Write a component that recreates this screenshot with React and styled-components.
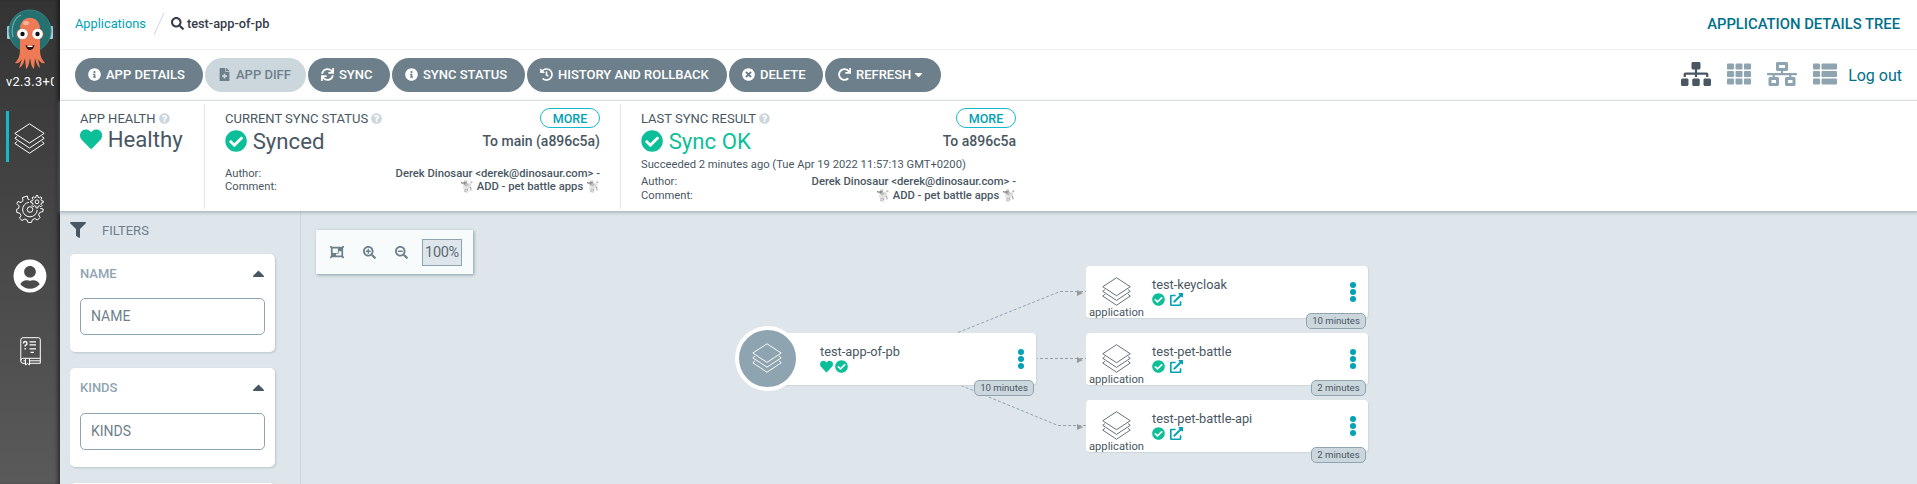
import React from 'react';
import styled, { createGlobalStyle } from 'styled-components';
import {
  FaSearch, FaInfoCircle, FaFileMedical, FaSync, FaHistory, FaTimesCircle, FaRedo, FaCaretDown, FaCaretUp,
  FaSitemap, FaTh, FaNetworkWired, FaThList, FaHeart, FaCheckCircle, FaQuestionCircle, FaFilter,
  FaObjectGroup, FaSearchPlus, FaSearchMinus, FaExternalLinkAlt, FaUserCircle,
} from 'react-icons/fa';

const c = {
  text: '#495763', slate: '#6d7f8b', steel: '#8fa4b1', pale: '#ccd6dd', bg: '#dee6eb',
  teal: '#00a2b3', deepTeal: '#006f8a', green: '#0dbf98', white: '#fff',
};

const GlobalStyle = createGlobalStyle`
  * { box-sizing: border-box; }
  body { margin: 0; font-family: Roboto, 'Liberation Sans', sans-serif; color: ${c.text}; background: ${c.bg}; overflow: hidden; }
  svg { display: block; flex: none; }
`;

const Page = styled.div`display: flex; height: 484px; overflow: hidden;`;

const Sidebar = styled.nav`
  width: 60px; flex: none; display: flex; flex-direction: column; align-items: center;
  padding-top: 8px; color: #fff;
  background: linear-gradient(to bottom, #343434, #5a5a5a);
  box-shadow: inset -4px 0 4px -2px rgba(0, 0, 0, .55);
`;
const Version = styled.div`
  width: 48px; margin-top: 2px; margin-bottom: 1px; overflow: hidden; white-space: nowrap;
  font-size: 12.8px; line-height: 19px; letter-spacing: .35px; height: 18px;
`;
const NavItem = styled.div`
  width: 60px; height: ${p => p.$h}px; margin-top: ${p => p.$gap}px;
  display: flex; align-items: center; justify-content: center;
  ${p => p.$active && `
    align-self: flex-start; width: 45px; margin-left: 6px; padding-top: 3px; padding-right: 1px;
    border-left: 3px solid #18b8cc;
  `}
`;

const Main = styled.div`flex: 1; min-width: 0; display: flex; flex-direction: column;`;

const TopBar = styled.header`
  height: 50px; flex: none; display: flex; align-items: center; padding: 0 17px 2px 15px;
  background: #fff; border-bottom: 1px solid #ecf0f3;
`;
const Crumb = styled.span`
  font-size: 12.8px; line-height: 20px; font-weight: ${p => (p.$current ? 500 : 400)};
  color: ${p => (p.$current ? '#363c4a' : c.teal)};
`;
const CrumbSearch = styled(FaSearch)`color: #363c4a; margin-right: 3px;`;
const Slash = styled.svg`margin: 0 6px 0 7px;`;
const Title = styled.h1`margin: 0 0 0 auto; font-size: 14.8px; font-weight: 500; color: ${c.deepTeal};`;

const Toolbar = styled.div`
  height: 51px; flex: none; display: flex; align-items: center; padding: 0 15px;
  background: #fff; border-bottom: 1px solid #ecf0f3;
`;
const Button = styled.button`
  width: ${p => p.$w}px; height: 34px; margin: 0 2px 0 0; padding: 0 0 1px 13px; border: 0; border-radius: 17px;
  display: flex; align-items: center; gap: 5px; white-space: nowrap;
  font: 500 13px Roboto, sans-serif;
  background: ${p => (p.$disabled ? c.pale : c.slate)};
  color: ${p => (p.$disabled ? c.slate : '#fff')};
  span { display: flex; align-items: center; gap: 1px; }
`;
const Views = styled.div`margin-left: auto; display: flex; align-items: center; color: ${c.steel};`;
const ViewIcon = styled.div`margin: 0 ${p => p.$gap}px 2px 0; color: ${p => (p.$active ? c.text : c.steel)};`;
const Logout = styled.a`font-size: 16px; color: ${c.deepTeal};`;

const StatusPanel = styled.section`
  height: 110px; flex: none; display: flex; padding: 3px 0 2px; background: #fff;
  box-shadow: 0 1px 3px 1px rgba(130, 150, 160, .55); position: relative; z-index: 2;
`;
const StatusItem = styled.div`
  width: ${p => p.$w}px; padding: 4px 20px 0; border-right: ${p => (p.$last ? 0 : '1px solid #dee6eb')};
`;
const StatusRow = styled.div`
  display: flex; align-items: center; justify-content: space-between; height: ${p => p.$h}px; white-space: nowrap;
`;
const Label = styled.div`display: flex; align-items: center; gap: 3px; font-size: 13px; svg { color: ${c.pale}; }`;
const More = styled.button`
  width: 60px; height: 20px; padding: 0; border: 1px solid #18b8cc; border-radius: 10px; background: #fff;
  font: 500 12.5px/17px Roboto, sans-serif; color: ${c.teal};
`;
const Value = styled.div`
  display: flex; align-items: center; gap: 5.5px; font-size: 22.2px;
  color: ${p => (p.$green ? c.green : c.text)};
  svg { color: ${c.green}; }
`;
const Revision = styled.div`font-size: 14px; font-weight: 500;`;
const Meta = styled.div`
  display: flex; justify-content: space-between; font-size: 11.2px; line-height: ${p => p.$lh}px; height: ${p => p.$lh}px;
  margin-top: ${p => p.$mt || 0}px; white-space: nowrap;
  b { font-weight: 500; font-size: 11.25px; }
`;

const Body = styled.div`flex: 1; min-height: 0; display: flex;`;
const Filters = styled.aside`
  width: 241px; flex: none; padding: 9px 25px 0 10px; border-right: 1px solid #ccd6da; overflow: hidden;
`;
const FiltersTitle = styled.div`
  display: flex; align-items: center; gap: 16px; height: 20px; margin-bottom: 14px;
  font-size: 13px; color: ${c.slate}; svg { color: ${c.text}; }
`;
const FilterCard = styled.div`
  height: ${p => p.$h}px; margin-bottom: 16px; padding: 9px 10px 0; background: #fff; border-radius: 5px;
  box-shadow: 1px 1px 2px rgba(140, 160, 170, .45);
`;
const FilterHead = styled.div`
  display: flex; align-items: center; justify-content: space-between; height: 20px;
  font-size: 13px; font-weight: 500; color: ${c.steel};
  svg { color: ${c.text}; margin-right: -3px; }
`;
const FilterInput = styled.input`
  display: block; width: 100%; height: 37px; margin-top: ${p => p.$mt}px; padding: 0 10px 2px; border: 1px solid ${c.steel};
  border-radius: 5px; font: 400 14px Roboto, sans-serif; background: #fff; outline: 0;
  &::placeholder { color: ${c.slate}; opacity: 1; }
`;

const Canvas = styled.div`flex: 1; position: relative; overflow: hidden;`;
const ZoomBar = styled.div`
  width: 157px; height: 44px; margin: 19px 0 0 15px; padding: 0 11px 0 14px; display: flex; align-items: center;
  gap: 19px; background: #f8fbfc; color: ${c.slate};
  box-shadow: 1px 1px 3px rgba(100, 125, 140, .7);
`;
const Percent = styled.div`
  flex: none; width: 40px; height: 27px; border: 1px solid ${c.steel}; background: ${c.bg}; color: #5b6a76;
  font-size: 14.5px; letter-spacing: -.3px; line-height: 25px; text-align: center; margin-left: -5px;
`;
const Edges = styled.svg`position: absolute; left: 0; top: 0;`;
const Node = styled.div`
  position: absolute; left: ${p => p.$x}px; top: ${p => p.$y}px; width: 282px; height: 52px;
  display: flex; background: #fff; border-radius: 4px; box-shadow: 1px 1px 1px #ccd6dd;
`;
const NodeKind = styled.div`
  width: 60px; height: 52px; padding: 11px 0 0 3px; display: flex; flex-direction: column; font-size: 11.2px; line-height: 13px;
  svg { margin: 0 0 0 13px; }
`;
const RootBadge = styled.div`
  position: absolute; left: -19px; top: -7px; width: 65px; height: 65px; border: 4px solid #fff; border-radius: 50%;
  background: ${c.steel}; display: flex; align-items: center; justify-content: center; padding: 0 1px 1px 0;
`;
const NodeInfo = styled.div`margin: 10px 0 0 ${p => (p.$root ? 66 : 6)}px;`;
const NodeTitle = styled.div`font-size: 12.8px; line-height: 17px; white-space: nowrap;`;
const NodeIcons = styled.div`display: flex; gap: ${p => p.$gap}px; color: ${c.green};`;
const LinkIcon = styled(FaExternalLinkAlt)`color: ${c.teal};`;
const Dots = styled.div`
  margin: 16px 12px 0 auto; display: flex; flex-direction: column; gap: 1px;
  i { width: 6px; height: 6px; border-radius: 50%; background: ${c.teal}; }
`;
const Age = styled.div`
  position: absolute; right: 2px; bottom: -11px; width: ${p => p.$w}px; height: 16px; border: 1px solid ${c.steel};
  border-radius: 5px; background: ${c.pale}; font-size: 9.6px; line-height: 13px; text-align: center; white-space: nowrap;
`;

const Layers = ({ size = 31, color = '#fff', width = 1 }) => (
  <svg width={size} height={size} viewBox="0 0 31 31" fill="none" stroke={color} strokeWidth={width} strokeLinejoin="round">
    <path d="M15.5 .8 30.2 10.4 15.5 20 .8 10.4Z" />
    <path d="M3.2 13.4 .8 15.3 15.5 25 30.2 15.3 27.8 13.4" />
    <path d="M3.2 18.4 .8 20.4 15.5 30.2 30.2 20.4 27.8 18.4" />
  </svg>
);

const Octopus = () => (
  <svg width="46" height="62" viewBox="0 0 46 62">
    <rect x="0" y="18" width="4" height="13" rx="1" fill="#a9c8d8" />
    <rect x="42" y="18" width="4" height="13" rx="1" fill="#a9c8d8" />
    <circle cx="23" cy="23" r="21" fill="#24716f" stroke="#2f8784" strokeWidth="1" />
    <path d="M6 29C3 17 9 9 14 7" fill="none" stroke="#6fb0ae" strokeWidth="1.2" />
    <path d="M13 21C13 6 33 6 33 21L33 43C33 48 35 52 38 55C35 56 33 54 31 51L33 60C30 58 29 54 28 50L27 61C24 59 24 54 23 50C22 54 22 59 19 61L18 50C17 54 16 58 12 60L15 51C13 54 11 56 8 55C11 52 13 48 13 43Z" fill="#ef7b56" />
    <ellipse cx="19" cy="15" rx="3" ry="2" fill="#f9b39b" />
    <circle cx="15.5" cy="26" r="5.600" fill="#fff" stroke="#dc5e3c" strokeWidth=".6" />
    <circle cx="30.5" cy="26" r="5.600" fill="#fff" stroke="#dc5e3c" strokeWidth=".6" />
    <circle cx="15.5" cy="26" r="2.2" fill="#111" />
    <circle cx="30.5" cy="26" r="2.2" fill="#111" />
    <path d="M18.5 37Q23 39 27.500 37Q26.500 42 23 42Q19.500 42 18.500 37Z" fill="#2a1512" />
    <path d="M20.500 37.800H25.500V39H20.500Z" fill="#fff" />
  </svg>
);

const gearPath = (cx, cy, ro, ri, n) => {
  const pts = [];
  for (let i = 0; i < n; i += 1) {
    [[-0.3, ri], [-0.17, ro], [0.17, ro], [0.3, ri]].forEach(([o, r]) => {
      const a = ((i + o) / n) * Math.PI * 2 - Math.PI / 2;
      pts.push(`${(cx + r * Math.cos(a)).toFixed(2)} ${(cy + r * Math.sin(a)).toFixed(2)}`);
    });
  }
  return `M${pts.join('L')}Z`;
};
const Gears = () => (
  <svg width="28" height="28" viewBox="0 0 28 28" fill="none" stroke="#fff" strokeWidth="1" strokeLinejoin="round">
    <path d="M13.500 4.500 12 4.300 11.300 1 6.500 2.500 7 5.800 5 7.500 2 6.500 .8 8.500M.8 8.500 3.200 11 2.600 13.500 .6 14.300 .8 17.500 3.800 18.200 5 20.500 3.500 23.200 6 25.500 8.800 24 11 25 12 27.500H15.500L16.300 24.800 18.800 23.600 21.500 25 24 22.500 22.600 19.800 23.700 17.500 27 16.500 27.200 14 24.200 13.500" />
    <circle cx="14" cy="14.500" r="2.800" />
    <path d="M13 7.300A7.300 7.300 0 1 0 21.200 15" />
    <path d={gearPath(21, 6.8, 6.3, 4.6, 8)} />
    <circle cx="21" cy="6.800" r="1.900" />
  </svg>
);

const Book = () => (
  <svg width="21" height="29" viewBox="0 0 21 29" fill="none" stroke="#fff" strokeWidth="1">
    <path d="M20.300 21V2.500Q20.300 .7 18.500 .7H3Q.8 .7 .8 3V24Q.8 26.300 3 26.300H5M20.300 21.300H3Q.8 21.300 .8 23.500M10 26.300H20.300M3.500 23.800H5M10 23.800H20.300M20.300 21V26.300" />
    <path d="M5.500 21.500V28L7.500 26.500 9.500 28V21.500" />
    <path d="M3.500 6.500Q3.500 4.500 5.200 4.500T7 6.500Q7 7.800 5.200 8.500V9.500M5.200 11V12.500" strokeWidth="1.400" />
    <path d="M9.500 4.800H16M9.500 7.800H16M9.500 11.800H16M10.500 15.300H14" strokeWidth="1.200" />
  </svg>
);

const edgeProps = { fill: 'none', stroke: '#8fa4b1', strokeWidth: 1, strokeDasharray: '3 2' };
const children = [
  { name: 'test-keycloak', age: '10 minutes', y: 55, w: 60 },
  { name: 'test-pet-battle', age: '2 minutes', y: 122, w: 55 },
  { name: 'test-pet-battle-api', age: '2 minutes', y: 189, w: 55 },
];

const MetaRows = ({ lh, mt }) => (
  <>
    <Meta $lh={lh} $mt={mt}><span>Author:</span><b>Derek Dinosaur &lt;derek@dinosaur.com&gt; -</b></Meta>
    <Meta $lh={lh}><span>Comment:</span><b>🐩 ADD - pet battle apps 🐩</b></Meta>
  </>
);

export default function App() {
  return (
    <Page>
      <GlobalStyle />
      <Sidebar>
        <Octopus />
        <Version>v2.3.3+07</Version>
        <NavItem $active $h={51} $gap={20}><Layers /></NavItem>
        <NavItem $h={40} $gap={27}><Gears /></NavItem>
        <NavItem $h={40} $gap={27}><FaUserCircle size={34} /></NavItem>
        <NavItem $h={40} $gap={35}><Book /></NavItem>
      </Sidebar>
      <Main>
        <TopBar>
          <Crumb>Applications</Crumb>
          <Slash width="12" height="22" viewBox="0 0 12 22" fill="none" stroke="#ccd6dd"><path d="M11 0 1 22" /></Slash>
          <CrumbSearch size={13} />
          <Crumb $current>test-app-of-pb</Crumb>
          <Title>APPLICATION DETAILS TREE</Title>
        </TopBar>
        <Toolbar>
          <Button $w={128}><FaInfoCircle />APP DETAILS</Button>
          <Button $w={101} $disabled><FaFileMedical />APP DIFF</Button>
          <Button $w={82}><FaSync />SYNC</Button>
          <Button $w={133}><FaInfoCircle />SYNC STATUS</Button>
          <Button $w={200}><FaHistory />HISTORY AND ROLLBACK</Button>
          <Button $w={94}><FaTimesCircle />DELETE</Button>
          <Button $w={116}><FaRedo /><span>REFRESH <FaCaretDown /></span></Button>
          <Views>
            <ViewIcon $gap={16} $active><FaSitemap size={30} /></ViewIcon>
            <ViewIcon $gap={16}><FaTh size={24} /></ViewIcon>
            <ViewIcon $gap={16}><FaNetworkWired size={30} /></ViewIcon>
            <ViewIcon $gap={11}><FaThList size={24} /></ViewIcon>
            <Logout>Log out</Logout>
          </Views>
        </Toolbar>
        <StatusPanel>
          <StatusItem $w={145}>
            <StatusRow $h={20}><Label>APP HEALTH <FaQuestionCircle size={11} /></Label></StatusRow>
            <StatusRow $h={22}><Value><FaHeart />Healthy</Value></StatusRow>
          </StatusItem>
          <StatusItem $w={416}>
            <StatusRow $h={20}><Label>CURRENT SYNC STATUS <FaQuestionCircle size={11} /></Label><More>MORE</More></StatusRow>
            <StatusRow $h={26}><Value><FaCheckCircle />Synced</Value><Revision>To main (a896c5a)</Revision></StatusRow>
            <MetaRows lh={13} mt={13} />
          </StatusItem>
          <StatusItem $w={415} $last>
            <StatusRow $h={20}><Label>LAST SYNC RESULT <FaQuestionCircle size={11} /></Label><More>MORE</More></StatusRow>
            <StatusRow $h={26}><Value $green><FaCheckCircle />Sync OK</Value><Revision>To a896c5a</Revision></StatusRow>
            <Meta $lh={14} $mt={4}>Succeeded 2 minutes ago (Tue Apr 19 2022 11:57:13 GMT+0200)</Meta>
            <MetaRows lh={14} mt={3} />
          </StatusItem>
        </StatusPanel>
        <Body>
          <Filters>
            <FiltersTitle><FaFilter size={16} />FILTERS</FiltersTitle>
            <FilterCard $h={98}><FilterHead>NAME <FaCaretUp size={19} /></FilterHead><FilterInput $mt={15} placeholder="NAME" /></FilterCard>
            <FilterCard $h={99}><FilterHead>KINDS <FaCaretUp size={19} /></FilterHead><FilterInput $mt={16} placeholder="KINDS" /></FilterCard>
            <FilterCard $h={98} />
          </Filters>
          <Canvas>
            <ZoomBar>
              <FaObjectGroup size={14} /><FaSearchPlus size={13} /><FaSearchMinus size={13} /><Percent>100%</Percent>
            </ZoomBar>
            <Edges width="1616" height="273" viewBox="0 0 1616 273">
              <path {...edgeProps} d="M657 121.500 759 80.500H785M734 147.500H785M660 174.500 757 214.500H785" />
              <path fill="#999" d="M776 79 782 82 776 85ZM776 146 782 149 776 152ZM776 213 782 216 776 219Z" />
            </Edges>
            <Node $x={453} $y={122}>
              <RootBadge><Layers size={30} /></RootBadge>
              <NodeInfo $root>
                <NodeTitle>test-app-of-pb</NodeTitle>
                <NodeIcons $gap={2}><FaHeart size={13} /><FaCheckCircle size={13} /></NodeIcons>
              </NodeInfo>
              <Dots><i /><i /><i /></Dots>
              <Age $w={60}>10 minutes</Age>
            </Node>
            {children.map(n => (
              <Node key={n.name} $x={785} $y={n.y}>
                <NodeKind><Layers size={29} color={c.text} width={0.9} />application</NodeKind>
                <NodeInfo>
                  <NodeTitle>{n.name}</NodeTitle>
                  <NodeIcons $gap={5}><FaCheckCircle size={13} /><LinkIcon size={13} /></NodeIcons>
                </NodeInfo>
                <Dots><i /><i /><i /></Dots>
                <Age $w={n.w}>{n.age}</Age>
              </Node>
            ))}
          </Canvas>
        </Body>
      </Main>
    </Page>
  );
}
